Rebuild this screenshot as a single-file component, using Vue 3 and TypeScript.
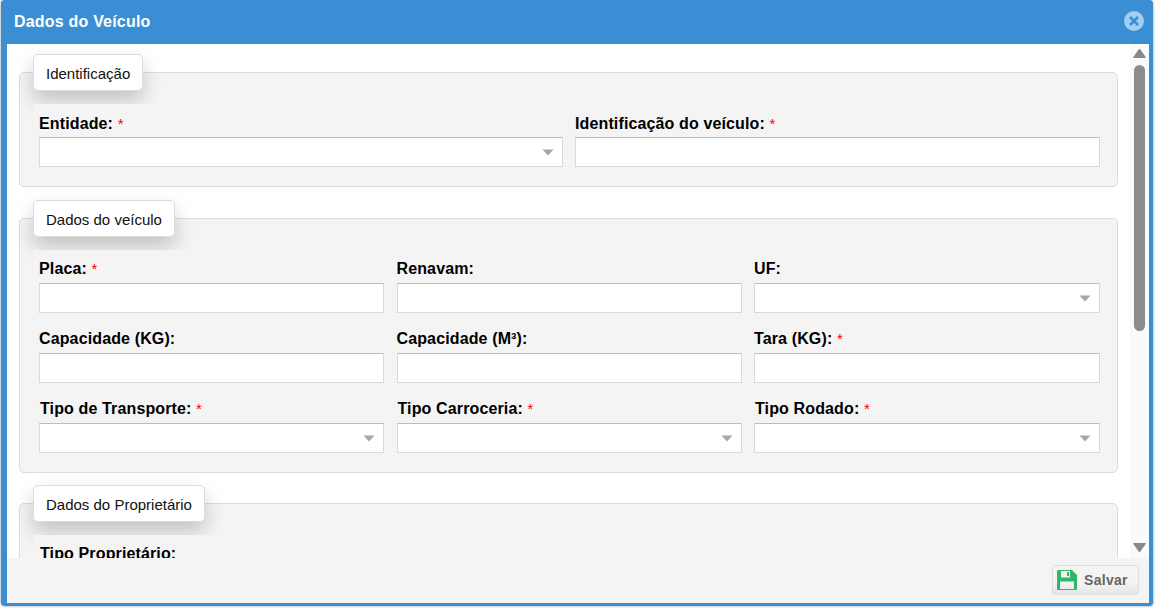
<script setup lang="ts">
interface Field {
  label: string
  required?: boolean
  select?: boolean
  indent?: boolean
}

const identificacao: Field[] = [
  { label: 'Entidade:', required: true, select: true },
  { label: 'Identificação do veículo:', required: true },
]

const veiculo: Field[] = [
  { label: 'Placa:', required: true },
  { label: 'Renavam:' },
  { label: 'UF:', select: true },
  { label: 'Capacidade (KG):' },
  { label: 'Capacidade (M³):' },
  { label: 'Tara (KG):', required: true },
  { label: 'Tipo de Transporte:', required: true, select: true, indent: true },
  { label: 'Tipo Carroceria:', required: true, select: true, indent: true },
  { label: 'Tipo Rodado:', required: true, select: true, indent: true },
]

const proprietario: Field[] = [{ label: 'Tipo Proprietário:', select: true, indent: true }]

const sections = [
  { title: 'Identificação', cols: 'two', fields: identificacao },
  { title: 'Dados do veículo', cols: 'three', fields: veiculo },
  { title: 'Dados do Proprietário', cols: 'three', fields: proprietario },
]
</script>

<template>
  <div class="page">
    <div class="window">
      <header class="titlebar">
        <span class="title">Dados do Veículo</span>
        <svg class="close" width="20" height="20" viewBox="0 0 20 20" aria-label="Fechar">
          <circle cx="10" cy="10" r="10" fill="#a3cdee" />
          <path d="M6 6l8 8M14 6l-8 8" stroke="#3a8fd4" stroke-width="2.6" fill="none" />
        </svg>
      </header>

      <div class="body">
        <main class="content">
          <section v-for="s in sections" :key="s.title" class="group">
            <div class="legend">{{ s.title }}</div>
            <div class="fields" :class="s.cols">
              <div v-for="f in s.fields" :key="f.label" class="field">
                <label class="label" :class="{ indent: f.indent }">
                  {{ f.label }}
                  <span v-if="f.required" class="req">*</span>
                </label>
                <div v-if="f.select" class="select">
                  <svg class="caret" width="12" height="7" viewBox="0 0 12 7">
                    <path d="M0.5 0.5h11L6 6.5z" fill="#a6a6a6" />
                  </svg>
                </div>
                <input v-else class="input" type="text" />
              </div>
            </div>
          </section>
        </main>

        <div class="scrollbar">
          <svg width="13" height="10" viewBox="0 0 13 10">
            <path d="M6.5 1L12.5 9.5H0.5z" fill="#888" stroke="#888" stroke-linejoin="round" />
          </svg>
          <div class="thumb"></div>
          <div class="spacer"></div>
          <svg width="13" height="10" viewBox="0 0 13 10">
            <path d="M0.5 0.5H12.5L6.5 9z" fill="#888" stroke="#888" stroke-linejoin="round" />
          </svg>
        </div>
      </div>

      <footer class="footer">
        <button class="save" type="button">
          <svg width="20" height="20" viewBox="0 0 20 20">
            <path
              fill="#2eb768"
              fill-rule="evenodd"
              d="M1 0h14l5 5v14a1 1 0 0 1-1 1H1a1 1 0 0 1-1-1V1a1 1 0 0 1 1-1zM4 1v6.5h9V1zM10 2v4h2V2zM3 11.5V19h14v-7.5z"
            />
          </svg>
          <span>Salvar</span>
        </button>
      </footer>
    </div>
  </div>
</template>

<style>
html,
body {
  margin: 0;
  background: #fff;
}
</style>

<style scoped>
.page {
  width: 1158px;
  height: 608px;
  overflow: hidden;
  font-family: "Liberation Sans", Arial, sans-serif;
  padding: 0 0 0 1px;
  box-sizing: border-box;
}
.window {
  width: 1152px;
  height: 606px;
  box-sizing: border-box;
  display: flex;
  flex-direction: column;
  background: #3a8fd4;
  border-radius: 4px;
  padding: 0 4px 3px 6px;
  box-shadow: 0 0 3px rgba(0, 0, 0, 0.45);
}
.titlebar {
  flex: 0 0 44px;
  box-sizing: border-box;
  display: flex;
  align-items: center;
  justify-content: space-between;
  padding: 0 5px 2px 7px;
}
.title {
  margin-top: 2px;
  color: #fff;
  font-weight: bold;
  font-size: 16px;
  letter-spacing: 0.2px;
}
.body {
  flex: 1;
  min-height: 0;
  display: flex;
  background: #fff;
}
.content {
  flex: 1;
  min-width: 0;
  overflow: hidden;
  padding: 28px 12px 0;
}
.group {
  background: #f4f4f4;
  border: 1px solid #dcdcdc;
  border-radius: 5px;
  padding: 0 17px 19px 0;
  margin-bottom: 31px;
}
.group:nth-child(2) {
  margin-bottom: 30px;
}
.legend {
  width: fit-content;
  height: 37px;
  box-sizing: border-box;
  margin: -19px 0 13px 13px;
  padding: 1px 12px 0;
  display: flex;
  align-items: center;
  background: #fff;
  border: 1px solid #dcdcdc;
  border-radius: 5px;
  box-shadow: 0 10px 20px rgba(0, 0, 0, 0.2);
  color: #111;
  font-size: 15px;
}
.fields {
  display: grid;
  row-gap: 17px;
  margin-left: 13px;
  padding: 10px 0 0 6px;
  background: #f4f4f4;
  position: relative;
}
.fields.two {
  grid-template-columns: 524px 525px;
  column-gap: 12px;
  padding-top: 11px;
}
.fields.three {
  grid-template-columns: 345px 345px 346px;
  column-gap: 12.5px;
}
.label {
  display: block;
  height: 18px;
  line-height: 18px;
  margin-bottom: 5px;
  font-size: 16px;
  font-weight: bold;
  letter-spacing: 0.13px;
  color: #000;
  white-space: nowrap;
}
.fields.two .label {
  margin-bottom: 4px;
}
.label.indent {
  padding-left: 1px;
}
.req {
  color: #f00;
  font-weight: normal;
  font-size: 15px;
}
.input,
.select {
  display: block;
  width: 100%;
  height: 30px;
  box-sizing: border-box;
  margin: 0;
  padding: 0;
  background: #fff;
  border: 1px solid #d9d9d9;
  border-top-color: #bdbdbd;
  border-radius: 0;
  outline: none;
}
.select {
  display: flex;
  align-items: center;
  justify-content: flex-end;
  padding-right: 8px;
}
.caret {
  display: block;
}
.scrollbar {
  flex: 0 0 19px;
  display: flex;
  flex-direction: column;
  align-items: center;
  background: #fafafa;
  padding: 4px 0 5px;
  box-sizing: border-box;
}
.thumb {
  width: 11px;
  height: 266px;
  margin-top: 7px;
  background: #8c8c8c;
  border-radius: 6px;
}
.spacer {
  flex: 1;
}
.footer {
  flex: 0 0 45px;
  display: flex;
  align-items: flex-start;
  justify-content: flex-end;
  background: #f4f4f4;
  padding: 7px 10px 0 0;
  box-sizing: border-box;
}
.save {
  width: 87px;
  height: 30px;
  box-sizing: border-box;
  display: flex;
  align-items: center;
  gap: 7px;
  margin: 0;
  padding: 0 0 0 4px;
  border: 1px solid #dfdfdf;
  border-radius: 3px;
  background: linear-gradient(#f4f4f4 55%, #e6e6e6);
  color: #666;
  font-family: inherit;
  font-size: 14px;
  font-weight: bold;
  letter-spacing: 0.3px;
}
</style>
